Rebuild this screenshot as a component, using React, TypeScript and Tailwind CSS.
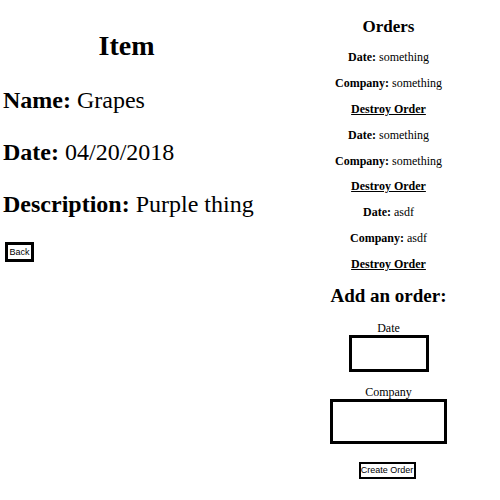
const orders = [
  { date: "something", company: "something" },
  { date: "something", company: "something" },
  { date: "asdf", company: "asdf" },
];

const App = () => {
  return (
    <div className="flex w-[500px] min-h-[500px] bg-white text-black [font-family:'Liberation_Serif','Times_New_Roman',serif]">
      {/* Item details */}
      <div className="w-[253px] shrink-0 pt-[30px] whitespace-nowrap">
        <h1 className="text-center text-[28px] leading-[31px] font-bold">Item</h1>
        <p className="mt-[26px] pl-[3px] text-[24px] leading-[27px]">
          <b>Name:</b> Grapes
        </p>
        <p className="mt-[25px] pl-[3px] text-[24px] leading-[27px]">
          <b>Date:</b> 04/20/2018
        </p>
        <p className="mt-[25px] pl-[3px] text-[24px] leading-[27px]">
          <b>Description:</b> Purple thing
        </p>
        <button className="mt-[24px] ml-[5px] h-[20px] w-[29px] border-[3px] border-black bg-white text-[9px] [font-family:'Liberation_Sans',Arial,sans-serif] leading-none">
          Back
        </button>
      </div>

      {/* Orders */}
      <div className="ml-[24px] w-[223px] flex flex-col items-center pt-[17px]">
        <h3 className="text-[17px] leading-[19px] font-bold">Orders</h3>
        <div className="mt-[14px] flex flex-col items-center gap-[11.9px] text-[12px] leading-[14px]">
          {orders.map((o, i) => (
            <div key={i} className="contents">
              <p>
                <b>Date:</b> {o.date}
              </p>
              <p>
                <b>Company:</b> {o.company}
              </p>
              <a href="#" className="font-bold underline">
                Destroy Order
              </a>
            </div>
          ))}
        </div>
        <h3 className="mt-[14px] text-[19px] leading-[21px] font-bold">Add an order:</h3>
        <label className="mt-[15px] flex flex-col items-center text-[12px] leading-[14px]">
          Date
          <input className="w-[80px] h-[37px] border-[3px] border-black bg-white" />
        </label>
        <label className="mt-[13px] flex flex-col items-center text-[12px] leading-[14px]">
          Company
          <input className="w-[117px] h-[45px] border-[3px] border-black bg-white" />
        </label>
        <button className="mt-[18px] mr-[3px] h-[17px] w-[57px] border-[2px] border-black bg-white text-[9px] [font-family:'Liberation_Sans',Arial,sans-serif] leading-none">
          Create Order
        </button>
      </div>
    </div>
  );
};

export default App;
